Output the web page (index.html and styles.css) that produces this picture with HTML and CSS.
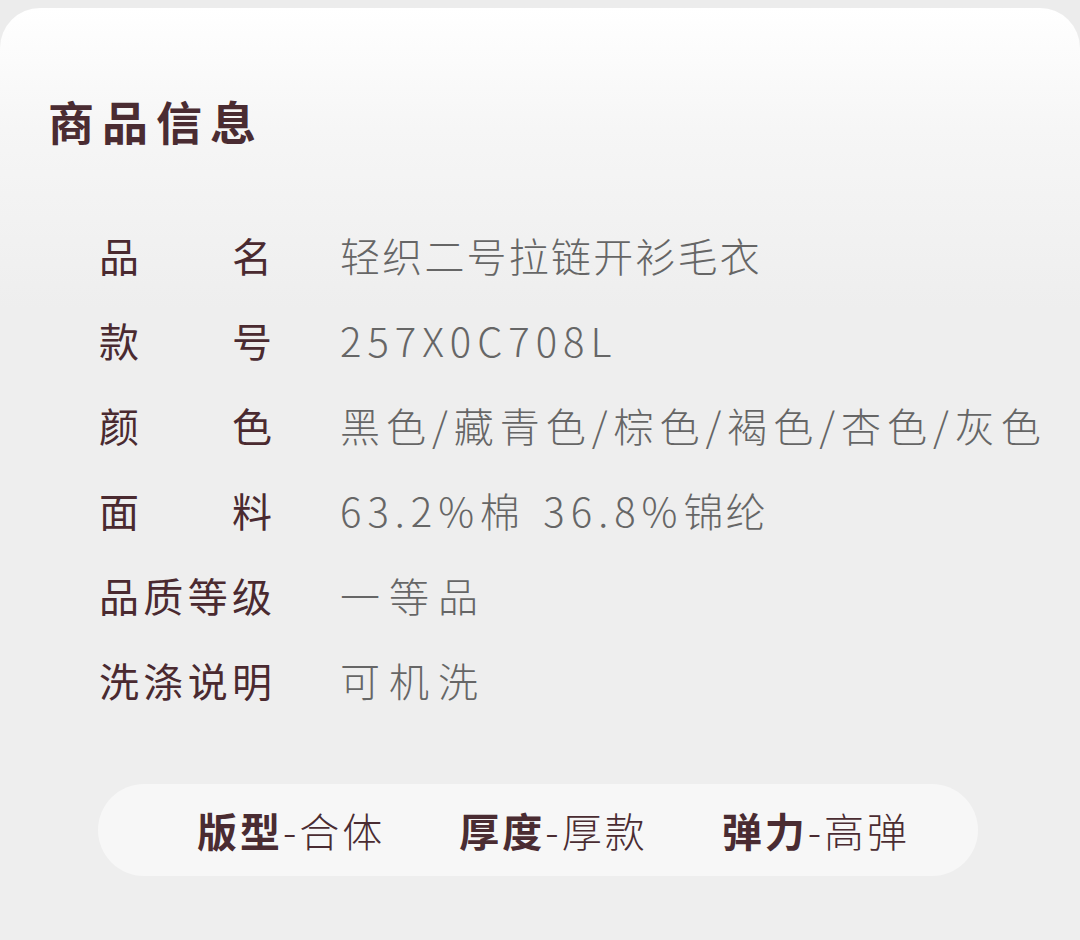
FILE: index.html
```html
<!DOCTYPE html>
<html lang="zh-CN">
<head>
    <meta charset="UTF-8">
    <meta name="viewport" content="width=device-width, initial-scale=1.0">
    <title>商品信息</title>
    <link rel="stylesheet" href="styles.css">
</head>
<body>
    <div class="card">
        <h1 class="title">商品信息</h1>

        <div class="info-list">
            <div class="info-row">
                <span class="label">品名</span>
                <span class="value">轻织二号拉链开衫毛衣</span>
            </div>
            <div class="info-row">
                <span class="label">款号</span>
                <span class="value num">257X0C708L</span>
            </div>
            <div class="info-row">
                <span class="label">颜色</span>
                <span class="value wide">黑色/藏青色/棕色/褐色/杏色/灰色</span>
            </div>
            <div class="info-row">
                <span class="label">面料</span>
                <span class="value"><span class="num">63.2%</span>棉<span class="sep"> </span><span class="num">36.8%</span>锦纶</span>
            </div>
            <div class="info-row">
                <span class="label">品质等级</span>
                <span class="value wider">一等品</span>
            </div>
            <div class="info-row">
                <span class="label">洗涤说明</span>
                <span class="value wider">可机洗</span>
            </div>
        </div>

        <div class="tags">
            <span class="tag"><b>版型</b>-合体</span>
            <span class="tag"><b>厚度</b>-厚款</span>
            <span class="tag"><b>弹力</b>-高弹</span>
        </div>
    </div>
</body>
</html>
```

FILE: styles.css
```css
body {
    margin: 0;
    background: #ececec;
    font-family: "Noto Sans CJK SC", "Noto Sans", sans-serif;
}
.card {
    margin-top: 8px;
    min-height: 932px;
    border-radius: 40px 40px 0 0;
    background: linear-gradient(#ffffff 0, #f6f6f6 120px, #eeeeee 300px, #eeeeee 100%);
    padding-top: 89px;
    box-sizing: border-box;
}
.title {
    margin: 0 0 0 48px;
    font-size: 46px;
    line-height: 46px;
    font-weight: bold;
    letter-spacing: 8px;
    color: #4a2c32;
}
.info-list {
    margin-top: 70px;
    padding-left: 99px;
}
.info-row {
    display: flex;
    height: 85px;
    line-height: 85px;
    font-size: 40px;
}
.label {
    width: 173px;
    margin-right: 68px;
    color: #4a2a30;
    text-align: justify;
    text-align-last: justify;
}
.value {
    color: #666666;
    font-weight: 300;
    letter-spacing: 2.2px;
    white-space: nowrap;
}
.value.wide {
    letter-spacing: 6px;
}
.value.wider {
    letter-spacing: 9px;
}
.num {
    letter-spacing: 6px;
}
.sep {
    padding-right: 10px;
}
.tags {
    display: flex;
    align-items: center;
    gap: 74px;
    margin: 61px 0 0 98px;
    width: 880px;
    height: 92px;
    box-sizing: border-box;
    padding-left: 99px;
    border-radius: 46px;
    background: #f7f7f7;
}
.tag {
    font-size: 40px;
    color: #4a2c32;
    font-weight: 300;
    letter-spacing: 3px;
}
.tag b {
    font-weight: bold;
}
```
